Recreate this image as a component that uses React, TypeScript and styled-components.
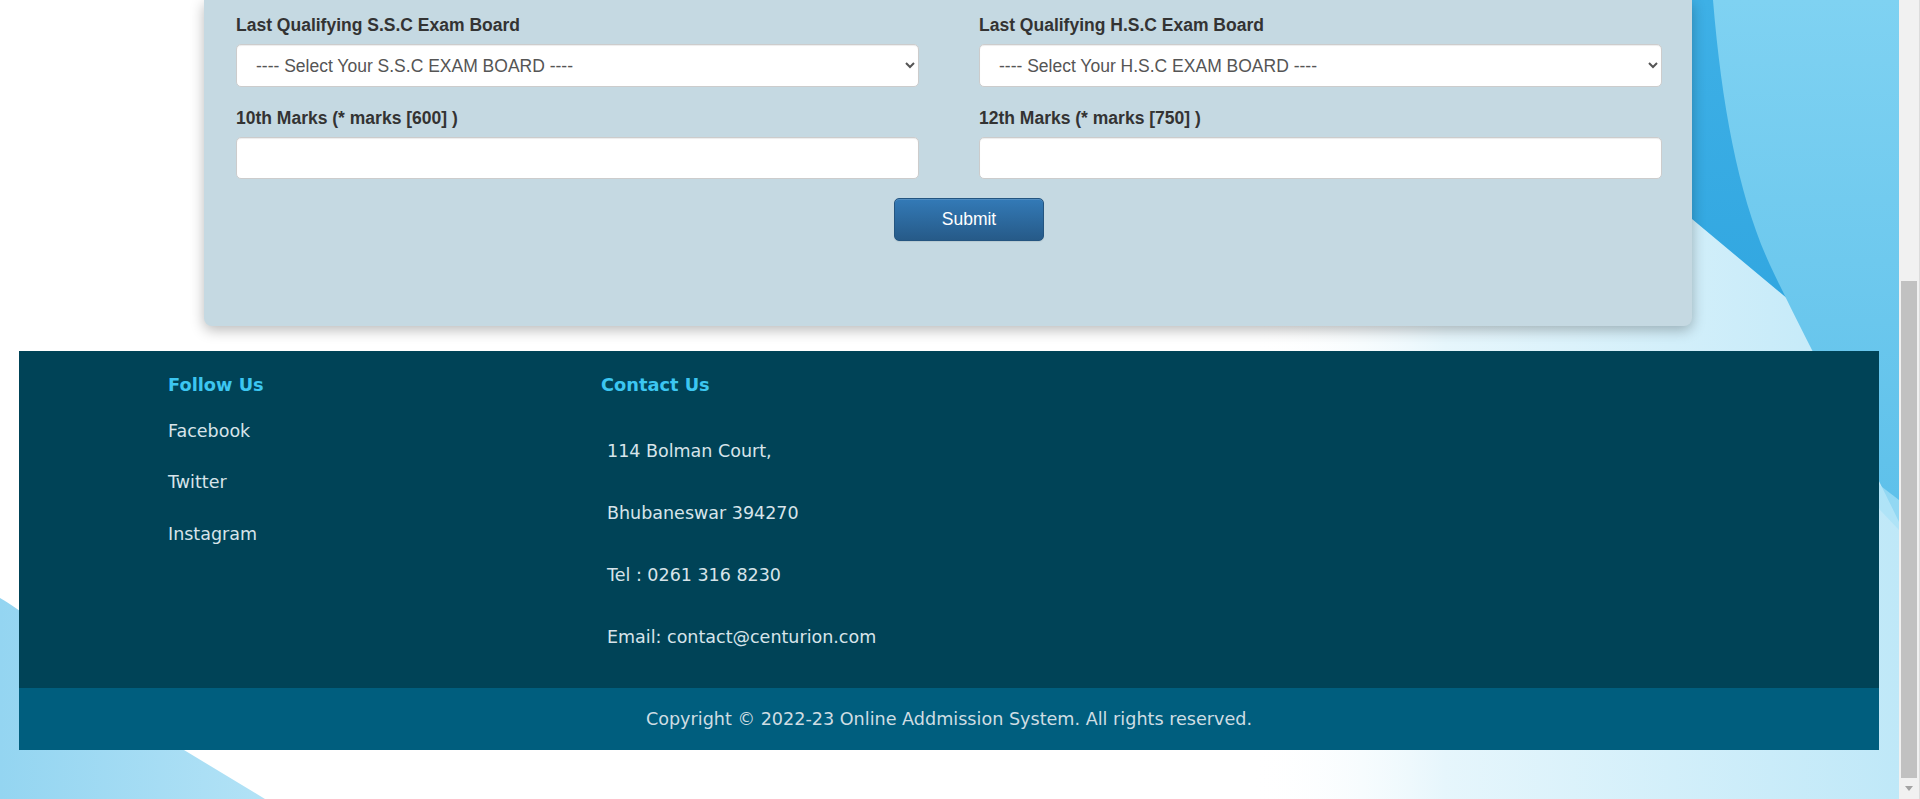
import React from "react";
import styled, { createGlobalStyle } from "styled-components";

const GlobalStyle = createGlobalStyle`
  html, body {
    margin: 0;
    padding: 0;
    background: #ffffff;
    overflow: hidden;
  }
  * { box-sizing: border-box; }
`;

const Shell = styled.div`
  display: flex;
  width: 100vw;
  height: 100vh;
  overflow: hidden;
`;

const Viewport = styled.div`
  position: relative;
  flex: 1;
  overflow: hidden;
  background: #ffffff;
`;

const Backdrop = styled.svg`
  position: absolute;
  inset: 0;
  width: 100%;
  height: 100%;
  z-index: 0;
`;

const Content = styled.div`
  position: relative;
  z-index: 1;
  display: flex;
  flex-direction: column;
`;

const Card = styled.section`
  width: 1488px;
  margin: 0 0 0 204px;
  padding: 13px 30px 85px 32px;
  background: #c5d9e2;
  border-radius: 0 0 8px 8px;
  box-shadow: 0 4px 14px rgba(0, 0, 0, 0.28);
`;

const FormGrid = styled.div`
  display: grid;
  grid-template-columns: 1fr 1fr;
  column-gap: 60px;
`;

const Field = styled.div`
  display: flex;
  flex-direction: column;
  margin-bottom: 18.75px;
`;

const Label = styled.label`
  font-family: "Liberation Sans", Arial, sans-serif;
  font-weight: 700;
  font-size: 17.5px;
  line-height: 25px;
  color: #333333;
  margin-bottom: 6.25px;
`;

const controlCss = `
  width: 100%;
  height: 42.5px;
  padding: 0 15px;
  font-family: "Liberation Sans", Arial, sans-serif;
  font-size: 17.5px;
  color: #555555;
  background: #ffffff;
  border: 1px solid #cccccc;
  border-radius: 5px;
  box-shadow: inset 0 1px 1px rgba(0, 0, 0, 0.075);
  outline: none;
`;

const Select = styled.select`
  ${controlCss}
`;

const Input = styled.input`
  ${controlCss}
`;

const ButtonRow = styled.div`
  grid-column: 1 / -1;
  display: flex;
  justify-content: center;
  padding-left: 40px;
`;

const SubmitButton = styled.button`
  width: 150px;
  height: 43px;
  font-family: "Liberation Sans", Arial, sans-serif;
  font-size: 17.5px;
  color: #ffffff;
  background: linear-gradient(to bottom, #337ab7 0%, #265a88 100%);
  border: 1px solid #245580;
  border-radius: 5px;
  box-shadow: inset 0 1px 0 rgba(255, 255, 255, 0.15), 0 1px 1px rgba(0, 0, 0, 0.075);
  cursor: pointer;
`;

const Footer = styled.footer`
  margin: 25px 20px 0 19px;
  font-family: "DejaVu Sans", Verdana, sans-serif;
`;

const FooterMain = styled.div`
  height: 337px;
  background: #004357;
  display: grid;
  grid-template-columns: 433px 1fr;
  padding: 22.5px 0 0 149px;
`;

const FooterColumn = styled.div`
  display: flex;
  flex-direction: column;
`;

const FooterHeading = styled.h4`
  margin: 0;
  font-size: 17.8px;
  line-height: 22px;
  font-weight: 700;
  color: #3cc6f1;
`;

const LinkList = styled.ul`
  list-style: none;
  margin: 10px 0 0;
  padding: 0;
`;

const LinkItem = styled.li`
  font-size: 17.5px;
  line-height: 51.5px;
  color: #d7e4ea;
`;

const AddressList = styled.ul`
  list-style: none;
  margin: 24px 0 0;
  padding: 0 0 0 6px;
`;

const AddressItem = styled.li`
  font-size: 17.5px;
  line-height: 62px;
  color: #d7e4ea;
`;

const CopyrightBar = styled.div`
  height: 62px;
  background: #005e7e;
  display: flex;
  align-items: center;
  justify-content: center;
  font-size: 17.6px;
  color: #cfdde3;
`;

const ScrollBar = styled.div`
  width: 21px;
  height: 100%;
  display: flex;
  flex-direction: column;
  background: #f1f1f1;
  border-right: 1px solid #dcdcdc;
`;

const ScrollSpacer = styled.div`
  flex: 0 0 281px;
`;

const ScrollThumb = styled.div`
  flex: 1;
  margin: 0 2px 0 2px;
  background: #c1c1c1;
`;

const ScrollArrow = styled.div`
  flex: 0 0 21px;
  display: flex;
  align-items: center;
  justify-content: center;
  &::after {
    content: "";
    width: 0;
    height: 0;
    border-left: 4.5px solid transparent;
    border-right: 4.5px solid transparent;
    border-top: 5px solid #a3a3a3;
  }
`;

const BackgroundArt: React.FC = () => (
  <Backdrop viewBox="0 0 1899 799" preserveAspectRatio="none" aria-hidden="true">
    <defs>
      <linearGradient id="paleFade" x1="0" y1="0" x2="1" y2="0">
        <stop offset="0" stopColor="#ffffff" stopOpacity="0" />
        <stop offset="0.3" stopColor="#e6f6fc" stopOpacity="1" />
        <stop offset="1" stopColor="#bfe8f8" stopOpacity="1" />
      </linearGradient>
      <linearGradient id="darkBlue" x1="0" y1="0" x2="0" y2="1">
        <stop offset="0" stopColor="#3eb0e6" />
        <stop offset="1" stopColor="#2ea4df" />
      </linearGradient>
      <linearGradient id="lightBlue" x1="0" y1="0" x2="0" y2="1">
        <stop offset="0" stopColor="#7fd2f2" />
        <stop offset="1" stopColor="#5dc0ea" />
      </linearGradient>
      <linearGradient id="leftBlue" x1="0" y1="0" x2="1" y2="0">
        <stop offset="0" stopColor="#94d5f1" />
        <stop offset="1" stopColor="#b2e2f6" />
      </linearGradient>
    </defs>
    <rect x="0" y="0" width="1899" height="799" fill="#ffffff" />
    <rect x="1250" y="0" width="649" height="799" fill="url(#paleFade)" />
    <path d="M1550,0 L1899,0 L1899,392 L1692,219 L1550,150 Z" fill="url(#darkBlue)" />
    <path
      d="M1713,0 C1722,110 1740,200 1770,265 C1810,350 1860,440 1899,522 L1899,0 Z"
      fill="url(#lightBlue)"
    />
    <path d="M1860,470 L1899,500 L1899,530 L1880,510 Z" fill="#a8e1f6" opacity="0.7" />
    <path d="M0,598 C40,620 110,690 184,750 L265,799 L0,799 Z" fill="url(#leftBlue)" />
  </Backdrop>
);

const followLinks = ["Facebook", "Twitter", "Instagram"];
const contactLines = [
  "114 Bolman Court,",
  "Bhubaneswar 394270",
  "Tel : 0261 316 8230",
  "Email: contact@centurion.com",
];

export default function App() {
  return (
    <>
      <GlobalStyle />
      <Shell>
        <Viewport>
          <BackgroundArt />
          <Content>
            <Card>
              <FormGrid>
                <Field>
                  <Label>Last Qualifying S.S.C Exam Board</Label>
                  <Select defaultValue="">
                    <option value="">---- Select Your S.S.C EXAM BOARD ----</option>
                  </Select>
                </Field>
                <Field>
                  <Label>Last Qualifying H.S.C Exam Board</Label>
                  <Select defaultValue="">
                    <option value="">---- Select Your H.S.C EXAM BOARD ----</option>
                  </Select>
                </Field>
                <Field>
                  <Label>10th Marks (* marks [600] )</Label>
                  <Input type="text" />
                </Field>
                <Field>
                  <Label>12th Marks (* marks [750] )</Label>
                  <Input type="text" />
                </Field>
                <ButtonRow>
                  <SubmitButton type="button">Submit</SubmitButton>
                </ButtonRow>
              </FormGrid>
            </Card>
            <Footer>
              <FooterMain>
                <FooterColumn>
                  <FooterHeading>Follow Us</FooterHeading>
                  <LinkList>
                    {followLinks.map((l) => (
                      <LinkItem key={l}>{l}</LinkItem>
                    ))}
                  </LinkList>
                </FooterColumn>
                <FooterColumn>
                  <FooterHeading>Contact Us</FooterHeading>
                  <AddressList>
                    {contactLines.map((l) => (
                      <AddressItem key={l}>{l}</AddressItem>
                    ))}
                  </AddressList>
                </FooterColumn>
              </FooterMain>
              <CopyrightBar>
                Copyright © 2022-23 Online Addmission System. All rights reserved.
              </CopyrightBar>
            </Footer>
          </Content>
        </Viewport>
        <ScrollBar>
          <ScrollSpacer />
          <ScrollThumb />
          <ScrollArrow />
        </ScrollBar>
      </Shell>
    </>
  );
}
